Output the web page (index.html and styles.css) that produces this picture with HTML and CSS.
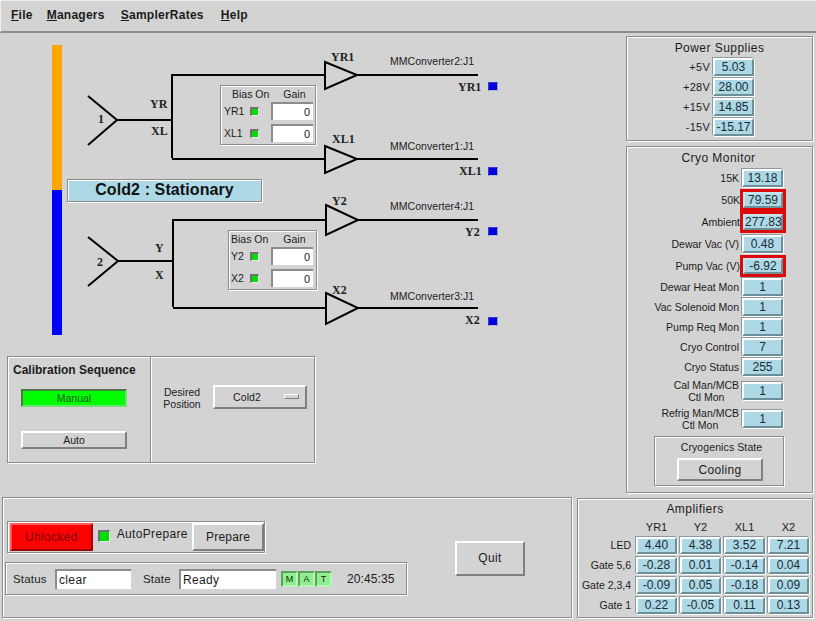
FILE: index.html
```html
<!DOCTYPE html>
<html>
<head lang="en">
    <meta charset="UTF-8">
    <title>Cryo Control</title>
    <link rel="stylesheet" href="styles.css">
</head>
<body>
<div id="app">
    <div id="menubar">
        <span class="menu"><u>F</u>ile</span>
        <span class="menu menu-m"><u>M</u>anagers</span>
        <span class="menu menu-s"><u>S</u>amplerRates</span>
        <span class="menu menu-h"><u>H</u>elp</span>
    </div>

    <div id="middle">
        <div id="left">
            <div id="diagram">
                <svg class="wires" width="625" height="320" viewBox="0 33 625 320">
                    <rect x="52" y="45" width="10" height="145" fill="#ffa500"/>
                    <rect x="52" y="190" width="10" height="145" fill="#0000ff"/>

                    <g class="wire">
                        <path d="M88 96L117 120L88 145M117 120H172M172 158V75H325M172 159H325"/>
                        <path d="M325 62L357 75L325 89ZM357 75H478"/>
                        <path d="M325 146L357 159L325 173ZM357 159H478"/>
                        <path d="M88 237L118 261L88 286M118 261H173M173 307V220H326M173 308H326"/>
                        <path d="M326 205L358 220L326 235ZM358 220H478"/>
                        <path d="M326 293L358 308L326 324ZM358 308H478"/>
                    </g>

                    <text class="sig" x="98" y="123">1</text>
                    <text class="sig" x="150" y="108">YR</text>
                    <text class="sig" x="151" y="135">XL</text>
                    <text class="sig" x="331" y="61">YR1</text>
                    <text class="sig" x="332" y="143">XL1</text>
                    <text class="sig" x="458" y="91">YR1</text>
                    <text class="sig" x="459" y="175">XL1</text>
                    <text class="sig" x="97" y="266">2</text>
                    <text class="sig" x="155" y="252">Y</text>
                    <text class="sig" x="155" y="279">X</text>
                    <text class="sig" x="332" y="205">Y2</text>
                    <text class="sig" x="332" y="294">X2</text>
                    <text class="sig" x="465" y="236">Y2</text>
                    <text class="sig" x="465" y="324">X2</text>

                    <text class="conn" x="390" y="65">MMConverter2:J1</text>
                    <text class="conn" x="390" y="150">MMConverter1:J1</text>
                    <text class="conn" x="390" y="210">MMConverter4:J1</text>
                    <text class="conn" x="390" y="300">MMConverter3:J1</text>
                </svg>

                <div class="port port1"></div>
                <div class="port port2"></div>
                <div class="port port3"></div>
                <div class="port port4"></div>

                <div id="title">Cold2 : Stationary</div>

                <div class="bias bias1">
                    <div class="bias-head"><span class="h-on">Bias On</span><span class="h-gain">Gain</span></div>
                    <div class="bias-row"><span class="b-name">YR1</span><i class="led"></i><span class="gain">0</span></div>
                    <div class="bias-row"><span class="b-name">XL1</span><i class="led"></i><span class="gain">0</span></div>
                </div>
                <div class="bias bias2">
                    <div class="bias-head"><span class="h-on">Bias On</span><span class="h-gain">Gain</span></div>
                    <div class="bias-row"><span class="b-name">Y2</span><i class="led"></i><span class="gain">0</span></div>
                    <div class="bias-row"><span class="b-name">X2</span><i class="led"></i><span class="gain">0</span></div>
                </div>
            </div>

            <div id="calib" class="etched">
                <div class="calib-l">
                    <div class="calib-title">Calibration Sequence</div>
                    <div class="btn btn-manual">Manual</div>
                    <div class="btn btn-auto">Auto</div>
                </div>
                <div class="calib-r">
                    <div class="desired">Desired<br>Position</div>
                    <div class="btn btn-cold">Cold2<i class="opt"></i></div>
                </div>
            </div>
        </div>

        <div id="side">
            <div id="power" class="etched">
                <div class="p-title">Power Supplies</div>
                <div class="row"><span>+5V</span><b class="cell">5.03</b></div>
                <div class="row"><span>+28V</span><b class="cell">28.00</b></div>
                <div class="row"><span>+15V</span><b class="cell">14.85</b></div>
                <div class="row"><span>-15V</span><b class="cell">-15.17</b></div>
            </div>
            <div id="cryo" class="etched">
                <div class="p-title">Cryo Monitor</div>
                <div class="row r22"><span>15K</span><b class="cell">13.18</b></div>
                <div class="row r22"><span>50K</span><b class="cell alarm">79.59</b></div>
                <div class="row r22"><span>Ambient</span><b class="cell alarm">277.83</b></div>
                <div class="row r22"><span>Dewar Vac (V)</span><b class="cell">0.48</b></div>
                <div class="row r22"><span>Pump Vac (V)</span><b class="cell alarm">-6.92</b></div>
                <div class="row"><span>Dewar Heat Mon</span><b class="cell">1</b></div>
                <div class="row"><span>Vac Solenoid Mon</span><b class="cell">1</b></div>
                <div class="row"><span>Pump Req Mon</span><b class="cell">1</b></div>
                <div class="row"><span>Cryo Control</span><b class="cell">7</b></div>
                <div class="row"><span>Cryo Status</span><b class="cell">255</b></div>
                <div class="row r28"><span>Cal Man/MCB<br>Ctl Mon</span><b class="cell">1</b></div>
                <div class="row r28"><span>Refrig Man/MCB<br>Ctl Mon</span><b class="cell">1</b></div>
                <div id="cryostate" class="etched">
                    <div class="cs-title">Cryogenics State</div>
                    <div class="btn btn-cool">Cooling</div>
                </div>
            </div>
        </div>
    </div>

    <div id="bottom">
        <div id="control" class="etched">
            <div class="ctl-left">
                <div id="lockbox" class="etched">
                    <div class="btn btn-lock">Unlocked</div>
                    <i class="led led-big"></i>
                    <span class="auto">AutoPrepare</span>
                    <div class="btn btn-prep">Prepare</div>
                </div>
                <div id="statusbox" class="etched">
                    <span class="s-lab">Status</span>
                    <span class="field f-status">clear</span>
                    <span class="s-lab s-state">State</span>
                    <span class="field f-state">Ready</span>
                    <div class="mat"><span>M</span><span>A</span><span>T</span></div>
                    <span class="clock">20:45:35</span>
                </div>
            </div>
            <div class="btn btn-quit">Quit</div>
        </div>
        <div id="amps" class="etched">
            <div class="p-title">Amplifiers</div>
            <div class="amp-grid">
                <span></span><em>YR1</em><em>Y2</em><em>XL1</em><em>X2</em>
                <span>LED</span><b class="cell">4.40</b><b class="cell">4.38</b><b class="cell">3.52</b><b class="cell">7.21</b>
                <span>Gate 5,6</span><b class="cell">-0.28</b><b class="cell">0.01</b><b class="cell">-0.14</b><b class="cell">0.04</b>
                <span>Gate 2,3,4</span><b class="cell">-0.09</b><b class="cell">0.05</b><b class="cell">-0.18</b><b class="cell">0.09</b>
                <span>Gate 1</span><b class="cell">0.22</b><b class="cell">-0.05</b><b class="cell">0.11</b><b class="cell">0.13</b>
            </div>
        </div>
    </div>
</div>
</body>
</html>
```

FILE: styles.css
```css
*{
    margin: 0;
    padding: 0;
    box-sizing: border-box;
}
html,body{
    height: 100%;
    overflow: hidden;
}
body{
    background: #d3d3d3;
    color: #1c1c1c;
    font-family: "Liberation Sans", Arial, sans-serif;
    font-size: 12px;
    letter-spacing: .35px;
}
i,em{
    font-style: normal;
}
#app{
    width: 816px;
    height: 621px;
}
.etched{
    border: 1px solid #8c8c8c;
    box-shadow: inset 1px 1px 0 #fff, 1px 1px 0 #fff;
}

/* menu */
#menubar{
    height: 33px;
    display: flex;
    align-items: center;
    padding: 0 0 2px 10px;
    border-top: 1px solid #eee;
    border-left: 1px solid #eee;
    border-bottom: 2px solid #8c8c8c;
    font-weight: bold;
    letter-spacing: .25px;
}
.menu-m{ margin-left: 14px; }
.menu-s{ margin-left: 16px; }
.menu-h{ margin-left: 17px; }

#middle{
    display: flex;
    height: 464px;
}
#left{
    width: 626px;
}

/* diagram, the places on it are the content */
#diagram{
    position: relative;
    height: 320px;
}
.wires{
    display: block;
}
.wire path{
    fill: none;
    stroke: #000;
    stroke-width: 2px;
}
.sig{
    font-family: "Liberation Serif", "Times New Roman", serif;
    font-size: 12px;
    font-weight: bold;
    letter-spacing: 0;
    fill: #222;
}
.conn{
    font-size: 10.5px;
    letter-spacing: .05px;
    fill: #1c1c1c;
}
.port{
    position: absolute;
    left: 488px;
    width: 10px;
    height: 9px;
    background: #0000e0;
    border-top: 1px solid #3a3ad0;
    border-left: 1px solid #3a3ad0;
    border-right: 1px solid #9c9cc8;
    border-bottom: 1px solid #b8b8c8;
}
.port1{ top: 49px; }
.port2{ top: 134px; }
.port3{ top: 194px; }
.port4{ top: 284px; }
#title{
    position: absolute;
    left: 67px;
    top: 146px;
    width: 195px;
    height: 23px;
    line-height: 20px;
    text-align: center;
    background: #add8e6;
    border: 1px solid #8c8c8c;
    box-shadow: inset 1px 1px 0 #fff, 1px 1px 0 #fff;
    font-size: 16px;
    font-weight: bold;
    letter-spacing: .1px;
    color: #111;
}
.bias{
    position: absolute;
    height: 60px;
    background: #d3d3d3;
    border: 1px solid #8c8c8c;
    box-shadow: inset 1px 1px 0 #fff, 1px 1px 0 #fff;
    font-size: 10.5px;
    letter-spacing: 0;
}
.bias1{
    left: 220px;
    top: 52px;
    width: 96px;
}
.bias2{
    left: 228px;
    top: 197px;
    width: 89px;
}
.bias-head{
    height: 16px;
    line-height: 16px;
    display: flex;
}
.h-on{ margin-left: 11px; }
.h-gain{ margin-left: 14px; }
.bias2 .h-on{ margin-left: 2px; }
.bias2 .h-gain{ margin-left: 15px; }
.bias-row{
    display: flex;
    align-items: center;
    height: 18px;
    margin-bottom: 4px;
}
.b-name{
    width: 29px;
    padding-left: 3px;
}
.bias2 .b-name{
    width: 21px;
    padding-left: 2px;
}
.led{
    display: block;
    width: 9px;
    height: 9px;
    background: #00e000;
    border-top: 2px solid #707070;
    border-left: 2px solid #707070;
    border-right: 1px solid #eee;
    border-bottom: 1px solid #eee;
}
.gain{
    display: block;
    width: 42px;
    height: 18px;
    margin-left: 12px;
    padding-right: 3px;
    line-height: 16px;
    text-align: right;
    font-size: 11px;
    background: #fff;
    border-top: 2px solid #8c8c8c;
    border-left: 2px solid #8c8c8c;
}

/* buttons */
.btn{
    border: 2px solid;
    border-color: #fff #7f7f7f #7f7f7f #fff;
    text-align: center;
    background: #d3d3d3;
}

/* calibration */
#calib{
    display: flex;
    width: 308px;
    height: 107px;
    margin: 3px 0 0 7px;
}
.calib-l{
    width: 143px;
    border-right: 1px solid #8c8c8c;
    box-shadow: 1px 0 0 #fff;
    padding: 6px 0 0 5px;
}
.calib-title{
    font-weight: bold;
    letter-spacing: 0;
    line-height: 14px;
}
.btn-manual,.btn-auto{
    width: 106px;
    height: 18px;
    line-height: 14px;
    margin-left: 8px;
    font-size: 10.5px;
    letter-spacing: 0;
}
.btn-manual{
    margin-top: 12px;
    background: #00ff00;
    border-color: #4a7a4a #6fe06f #6fe06f #4a7a4a;
    color: #225522;
}
.btn-auto{
    margin-top: 24px;
}
.calib-r{
    display: flex;
    align-items: flex-start;
    padding-top: 29px;
}
.desired{
    width: 62px;
    text-align: center;
    line-height: 12px;
    font-size: 10.5px;
    letter-spacing: 0;
}
.btn-cold{
    position: relative;
    width: 94px;
    height: 24px;
    line-height: 20px;
    margin-top: -1px;
    padding-right: 26px;
    font-size: 10.5px;
    letter-spacing: .1px;
}
.opt{
    position: absolute;
    right: 6px;
    top: 7px;
    width: 15px;
    height: 5px;
    background: #d3d3d3;
    border: 1px solid;
    border-color: #fff #7f7f7f #7f7f7f #fff;
}

/* right side */
#side{
    width: 187px;
    padding-top: 3px;
}
#power{
    height: 105px;
}
#cryo{
    height: 347px;
    margin-top: 5px;
}
.p-title{
    text-align: center;
    height: 20px;
    line-height: 22px;
    letter-spacing: .45px;
}
#cryo .p-title{
    height: 20px;
    line-height: 22px;
    padding-right: 2px;
}
.row{
    display: flex;
    justify-content: flex-end;
    align-items: center;
    height: 20px;
    line-height: 12px;
    font-size: 10.5px;
    letter-spacing: 0;
}
.row span{
    margin-right: 3px;
    text-align: center;
}
.r22{ height: 22px; }
.r28{ height: 28px; }
.cell{
    display: block;
    width: 41px;
    height: 18px;
    line-height: 14px;
    text-align: center;
    font-weight: normal;
    font-size: 12px;
    letter-spacing: 0;
    background: #add8e6;
    border: 2px solid;
    border-color: #fff #6f8f98 #6f8f98 #fff;
    box-shadow: -1px -1px 0 #8c9aa0, 1px 1px 0 #fff;
    color: #1c2c34;
}
#power .row{
    padding-right: 58px;
    font-size: 11px;
    letter-spacing: .25px;
}
#cryo .row{
    padding-right: 29px;
}
.alarm{
    width: 40px;
    height: 16px;
    line-height: 12px;
    border-color: #c8e4ee #6f8f98 #6f8f98 #c8e4ee;
    box-shadow: 0 0 0 3px #dc0a0a;
}
#cryostate{
    width: 130px;
    height: 50px;
    margin: 3px 0 0 27px;
}
.cs-title{
    height: 21px;
    line-height: 21px;
    text-align: center;
    font-size: 10.5px;
    letter-spacing: .1px;
    padding-left: 5px;
}
.btn-cool{
    width: 86px;
    height: 23px;
    line-height: 20px;
    margin-left: 22px;
}

/* bottom */
#bottom{
    display: flex;
    padding-left: 2px;
}
#control{
    display: flex;
    width: 570px;
    height: 121px;
}
.ctl-left{
    width: 452px;
}
#lockbox{
    display: flex;
    align-items: center;
    width: 258px;
    height: 32px;
    margin: 23px 0 0 4px;
    padding-left: 2px;
}
.btn-lock{
    width: 83px;
    height: 28px;
    line-height: 24px;
    background: #ff0000;
    border-color: #ff5a5a #a00000 #a00000 #ff5a5a;
    color: #7a0000;
}
.led-big{
    width: 12px;
    height: 12px;
    margin: -2px 0 0 5px;
}
.auto{
    margin: -6px 0 0 7px;
    width: 76px;
}
.btn-prep{
    width: 72px;
    height: 28px;
    line-height: 25px;
    letter-spacing: .2px;
}
#statusbox{
    display: flex;
    align-items: center;
    width: 402px;
    height: 33px;
    margin: 9px 0 0 2px;
    padding-left: 7px;
}
.s-lab{
    width: 42px;
    font-size: 11.5px;
    letter-spacing: .2px;
}
.s-state{
    width: 36px;
    margin-left: 12px;
}
.field{
    display: block;
    height: 20px;
    line-height: 18px;
    padding-left: 2px;
    background: #fff;
    border-top: 2px solid #8c8c8c;
    border-left: 2px solid #8c8c8c;
}
.f-status{
    width: 76px;
}
.f-state{
    width: 97px;
}
.mat{
    display: flex;
    margin-left: 5px;
}
.mat span{
    width: 17px;
    height: 16px;
    line-height: 13px;
    text-align: center;
    font-size: 9px;
    letter-spacing: 0;
    color: #0c2c0c;
    background: #90ee90;
    border: 2px solid;
    border-color: #5f9f5f #b8f4b8 #b8f4b8 #5f9f5f;
}
.clock{
    margin-left: 15px;
    letter-spacing: .1px;
}
.btn-quit{
    width: 70px;
    height: 35px;
    line-height: 31px;
    margin-top: 43px;
}
#amps{
    width: 236px;
    height: 120px;
    margin: 1px 0 0 5px;
}
#amps .p-title{
    height: 19px;
    line-height: 21px;
}
.amp-grid{
    display: grid;
    grid-template-columns: 55px repeat(4, 41px);
    grid-template-rows: 17px repeat(4, 20px);
    column-gap: 3px;
    align-items: center;
    font-size: 10.5px;
    letter-spacing: 0;
}
.amp-grid span{
    text-align: right;
    padding-right: 2px;
}
.amp-grid em{
    text-align: center;
    font-size: 11px;
}
.amp-grid .cell{
    height: 17px;
    line-height: 13px;
}
```
